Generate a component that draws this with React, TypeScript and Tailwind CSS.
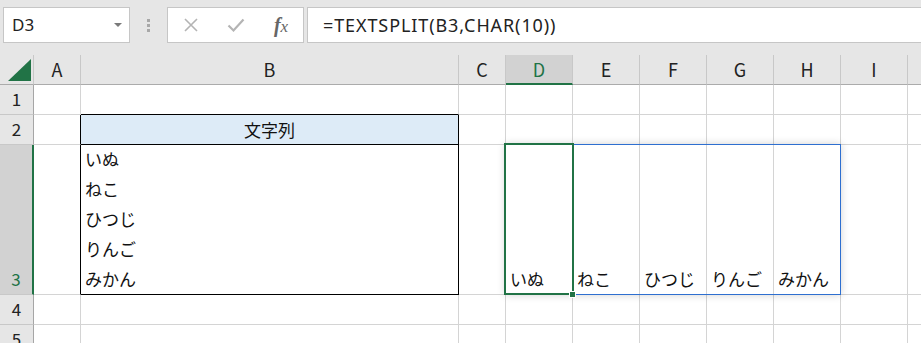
import React from "react";

const cols = [
  { k: "A", w: "w-[47px]" },
  { k: "B", w: "w-[378px]" },
  { k: "C", w: "w-[47px]" },
  { k: "D", w: "w-[67px]" },
  { k: "E", w: "w-[67px]" },
  { k: "F", w: "w-[67px]" },
  { k: "G", w: "w-[67px]" },
  { k: "H", w: "w-[67px]" },
  { k: "I", w: "w-[67px]" },
  { k: "", w: "w-[67px]" },
];

const font = "font-['Noto_Sans_CJK_JP','Noto_Sans',sans-serif]";

function RowHeader({ n, h, active }: { n: number; h: string; active?: boolean }) {
  return (
    <div
      className={`${h} w-[34px] shrink-0 flex items-end justify-center border-b border-[#c8c8c8] ${
        active
          ? "bg-[#d2d2d2] text-[#217346] border-r-2 border-r-[#217346]"
          : "bg-[#e6e6e6] text-[#222] border-r border-r-[#a6a6a6]"
      } text-[17px] leading-[30px]`}
    >
      {n}
    </div>
  );
}

export default function App() {
  const spill = ["いぬ", "ねこ", "ひつじ", "りんご", "みかん"];
  return (
    <div className={`w-[921px] h-[343px] overflow-hidden bg-white ${font}`}>
      {/* Formula bar area */}
      <div className="h-[55px] bg-[#e6e6e6] flex items-start pt-[7px] pl-[3px]">
        <div className="w-[127px] h-[36px] bg-white border border-[#c6c6c6] flex items-center justify-between pl-[8px] pr-[7px]">
          <span className="text-[17px] text-[#222] font-['Noto_Sans',sans-serif]">D3</span>
          <svg width="8" height="5" viewBox="0 0 8 5">
            <polygon points="0,0 8,0 4,4" fill="#7a7a7a" />
          </svg>
        </div>
        <div className="w-[37px] h-[36px] flex flex-col items-center justify-center gap-[2px]">
          <div className="w-[3px] h-[3px] bg-[#a8a8a8]" />
          <div className="w-[3px] h-[3px] bg-[#a8a8a8]" />
          <div className="w-[3px] h-[3px] bg-[#a8a8a8]" />
        </div>
        <div className="w-[137px] h-[36px] bg-white border border-[#c6c6c6] flex items-center">
          <div className="w-[44px] flex justify-center ml-[1px]">
            <svg width="16" height="16" viewBox="0 0 16 16">
              <path d="M2 2 L14 14 M14 2 L2 14" stroke="#b4b4b4" strokeWidth="1.6" />
            </svg>
          </div>
          <div className="w-[46px] flex justify-center">
            <svg width="18" height="16" viewBox="0 0 18 16">
              <path d="M1.5 8.5 L6.5 13.5 L16.5 2.5" stroke="#b4b4b4" strokeWidth="2.2" fill="none" />
            </svg>
          </div>
          <div className="w-[44px] flex justify-center">
            <span className="font-['Liberation_Serif',serif] italic text-[20px] text-[#666] leading-none">
              <span className="font-bold">f</span>
              <span className="text-[17px]">x</span>
            </span>
          </div>
        </div>
        <div className="ml-[3px] flex-1 h-[36px] bg-white border border-[#c6c6c6] border-r-0 flex items-center pl-[15px]">
          <span className="text-[18px] text-[#222] font-['Noto_Sans',sans-serif] tracking-[0.9px]">
            =TEXTSPLIT(B3,CHAR(10))
          </span>
        </div>
      </div>

      {/* Grid */}
      <div className="relative">
        {/* column header row */}
        <div className="flex h-[30px] bg-[#e6e6e6]">
          <div className="w-[34px] shrink-0 h-[30px] border-r border-r-[#c8c8c8] border-b border-b-[#ababab] relative">
            <svg className="absolute left-[8px] top-[4px]" width="23" height="22" viewBox="0 0 23 22">
              <polygon points="0,22 23,22 23,0" fill="#217346" />
            </svg>
          </div>
          {cols.map((c, i) => (
            <div
              key={i}
              className={`${c.w} shrink-0 h-[30px] flex items-center justify-center text-[18px] border-r border-r-[#c8c8c8] ${
                c.k === "D"
                  ? "bg-[#d2d2d2] text-[#217346] border-b-2 border-b-[#217346]"
                  : "text-[#222] border-b border-b-[#ababab]"
              }`}
            >
              {c.k}
            </div>
          ))}
        </div>

        {/* Row 1 */}
        <div className="flex h-[30px]">
          <RowHeader n={1} h="h-[30px]" />
          {cols.map((c, i) => (
            <div
              key={i}
              className={`${c.w} shrink-0 h-[30px] border-r border-r-[#d4d4d4] border-b ${
                c.k === "B" ? "border-b-black" : "border-b-[#d4d4d4]"
              }`}
            />
          ))}
        </div>

        {/* Row 2 */}
        <div className="flex h-[30px]">
          <RowHeader n={2} h="h-[30px]" />
          {cols.map((c, i) => (
            <div
              key={i}
              className={`${c.w} shrink-0 h-[30px] border-r border-b ${
                c.k === "A" || c.k === "B" ? "border-r-black" : "border-r-[#d4d4d4]"
              } ${c.k === "B" ? "border-b-black bg-[#ddebf7] flex items-center justify-center text-[17px] text-[#111]" : "border-b-[#d4d4d4]"}`}
            >
              {c.k === "B" ? "文字列" : null}
            </div>
          ))}
        </div>

        {/* Row 3 */}
        <div className="flex h-[150px]">
          <RowHeader n={3} h="h-[150px]" active />
          {cols.map((c, i) => {
            const idx = i - 3;
            const txt = idx >= 0 && idx < 5 ? spill[idx] : null;
            return (
              <div
                key={i}
                className={`${c.w} shrink-0 h-[150px] border-r border-b ${
                  c.k === "A" || c.k === "B" ? "border-r-black" : "border-r-[#d4d4d4]"
                } ${c.k === "B" ? "border-b-black" : "border-b-[#d4d4d4]"} flex flex-col justify-end pl-[4px] text-[17px] leading-[30px] text-[#111] whitespace-nowrap`}
              >
                {c.k === "B"
                  ? spill.map((s) => <div key={s}>{s}</div>)
                  : txt}
              </div>
            );
          })}
        </div>

        {/* Row 4 */}
        <div className="flex h-[30px]">
          <RowHeader n={4} h="h-[30px]" />
          {cols.map((c, i) => (
            <div key={i} className={`${c.w} shrink-0 h-[30px] border-r border-b border-[#d4d4d4]`} />
          ))}
        </div>

        {/* Row 5 */}
        <div className="flex h-[30px]">
          <RowHeader n={5} h="h-[30px]" />
          {cols.map((c, i) => (
            <div key={i} className={`${c.w} shrink-0 h-[30px] border-r border-b border-[#d4d4d4]`} />
          ))}
        </div>

        {/* Spill range outline */}
        <div className="absolute left-[505px] top-[89px] w-[336px] h-[151px] border border-[#2e6fd0] shadow-[0_0_8px_rgba(0,0,0,0.18)] pointer-events-none" />
        {/* Active cell */}
        <div className="absolute left-[504px] top-[88px] w-[70px] h-[152px] border-2 border-[#217346] pointer-events-none" />
        {/* Fill handle */}
        <div className="absolute left-[569px] top-[236px] w-[7px] h-[7px] bg-[#217346] border border-white pointer-events-none" />
      </div>
    </div>
  );
}
